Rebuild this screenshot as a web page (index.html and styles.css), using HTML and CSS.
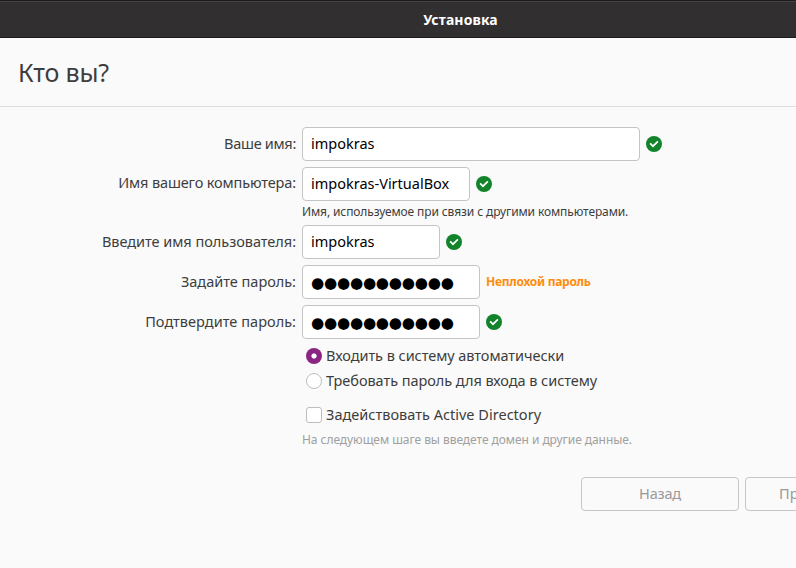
FILE: index.html
```html
<!DOCTYPE html>
<html lang="ru">
<head>
<meta charset="utf-8">
<title>Установка</title>
<link rel="stylesheet" href="styles.css">
</head>
<body>
<svg class="defs" aria-hidden="true"><symbol id="ok" viewBox="0 0 16 16"><circle cx="8" cy="8" r="8" fill="#12832a"/><path d="M4.1 7.4 7 10.2 11.9 5.4" fill="none" stroke="#fff" stroke-width="1.7"/></symbol></svg>
<div class="screen">
<div class="window">
  <header class="titlebar"><span class="t-title">Установка</span></header>
  <div class="heading"><h1>Кто вы?</h1></div>
  <main class="form">
    <div class="row"><label><span class="t-name">Ваше имя:</span></label><div class="field w-name"><span class="t-user">impokras</span></div><svg class="ok"><use href="#ok"/></svg></div>
    <div class="row"><label class="raised"><span class="t-host">Имя вашего компьютера:</span></label><div class="field w-host"><span class="t-hostval">impokras-VirtualBox</span></div><svg class="ok"><use href="#ok"/></svg></div>
    <p class="hint host-hint"><span class="t-hint">Имя, используемое при связи с другими компьютерами.</span></p>
    <div class="row"><label><span class="t-login">Введите имя пользователя:</span></label><div class="field w-login"><span class="t-user">impokras</span></div><svg class="ok"><use href="#ok"/></svg></div>
    <div class="row"><label><span class="t-pass">Задайте пароль:</span></label><div class="field w-pass"><span class="dots">●●●●●●●●●●●</span></div><strong class="strength"><span class="t-strength">Неплохой пароль</span></strong></div>
    <div class="row"><label><span class="t-confirm">Подтвердите пароль:</span></label><div class="field w-pass"><span class="dots">●●●●●●●●●●●</span></div><svg class="ok"><use href="#ok"/></svg></div>
    <div class="option auto"><i class="radio checked"></i><span class="t-auto">Входить в систему автоматически</span></div>
    <div class="option require"><i class="radio"></i><span class="t-require">Требовать пароль для входа в систему</span></div>
    <div class="option directory"><i class="checkbox"></i><span class="t-ad">Задействовать Active Directory</span></div>
    <p class="hint muted"><span class="t-adhint">На следующем шаге вы введете домен и другие данные.</span></p>
  </main>
  <footer class="actions"><button disabled><span class="t-back">Назад</span></button><button disabled><span class="t-next">Продолжить</span></button></footer>
</div>
</div>
</body>
</html>
```
FILE: styles.css
```css
* { box-sizing: border-box; }
body { margin: 0; background: #fafafa; color: #3d3d3d; font: 14.5px/20px "Noto Sans", sans-serif; }
.defs { display: none; }
.screen { width: 796px; height: 568px; overflow: hidden; }
.window { width: 921px; height: 568px; background: #fafafa; }
.titlebar { height: 38px; display: flex; align-items: center; justify-content: center; padding-top: 2px; background: #322f30; border-top: 1px solid #1d1b1c; border-bottom: 1px solid #1d1b1c; box-shadow: inset 0 1px #454243; color: #fff; font-weight: 700; font-size: 14px; }
.heading { height: 69px; padding: 0 18px; display: flex; align-items: center; border-bottom: 1px solid #dedede; }
h1 { margin: 0; font-size: 25px; line-height: 34px; font-weight: 400; letter-spacing: -0.15px; }
.form { padding: 20px 18px 0; }
.row { display: flex; align-items: center; gap: 6px; height: 34px; margin-bottom: 6px; }
.row label { width: 278px; padding-bottom: 2px; text-align: right; white-space: nowrap; }
.row label.raised { padding-bottom: 4px; }
.field { height: 34px; display: flex; align-items: center; padding: 0 8px 2px; border: 1px solid #c4c4c4; border-radius: 4px; background: #fff; color: #000; white-space: nowrap; }
.w-name { width: 338px; }
.w-host { width: 168px; }
.w-login { width: 138px; }
.w-pass { width: 178px; padding-top: 1px; padding-bottom: 0; }
.ok { width: 16px; height: 16px; flex: none; }
.dots { font: 15.2px/20px "DejaVu Sans", sans-serif; letter-spacing: -0.28px; }
.strength { color: #ff8c0a; font-size: 12px; }
.hint { margin: 0 0 0 284px; height: 18px; font-size: 12px; line-height: 18px; white-space: nowrap; }
.host-hint { margin-top: -4px; margin-bottom: 4px; }
.muted { color: #a0a0a0; }
.option { display: flex; align-items: center; gap: 4px; height: 22px; margin-left: 288px; white-space: nowrap; }
.option span { padding-bottom: 2px; }
.auto { margin-bottom: 3px; }
.require { margin-bottom: 12px; }
.directory { margin-bottom: 5px; }
.radio, .checkbox { width: 16px; height: 16px; border: 1px solid #bdbdbd; background: #fff; }
.radio { border-radius: 50%; }
.checkbox { border-radius: 3px; }
.radio.checked { border: 0; background: radial-gradient(circle, #fff 2.2px, #8b2583 3px); }
.actions { display: flex; justify-content: flex-end; gap: 6px; padding: 28px 18px 0; }
button { width: 158px; height: 34px; padding: 0 0 2px; border: 1px solid #c6c6c6; border-radius: 4px; background: #fafafa; color: #999; font: inherit; }

.t-title { letter-spacing: 0.1px; }
.t-name { letter-spacing: -0.3px; }
.t-host { letter-spacing: -0.13px; }
.t-hint { letter-spacing: -0.11px; }
.t-login { letter-spacing: -0.03px; }
.t-confirm { letter-spacing: 0.05px; }
.t-auto, .t-require { letter-spacing: -0.05px; }
.t-ad { letter-spacing: 0.02px; }
.t-adhint { letter-spacing: -0.055px; }
.t-strength { letter-spacing: -0.27px; }
.t-back { letter-spacing: -0.2px; }
.t-next { letter-spacing: 0.15px; }
```
